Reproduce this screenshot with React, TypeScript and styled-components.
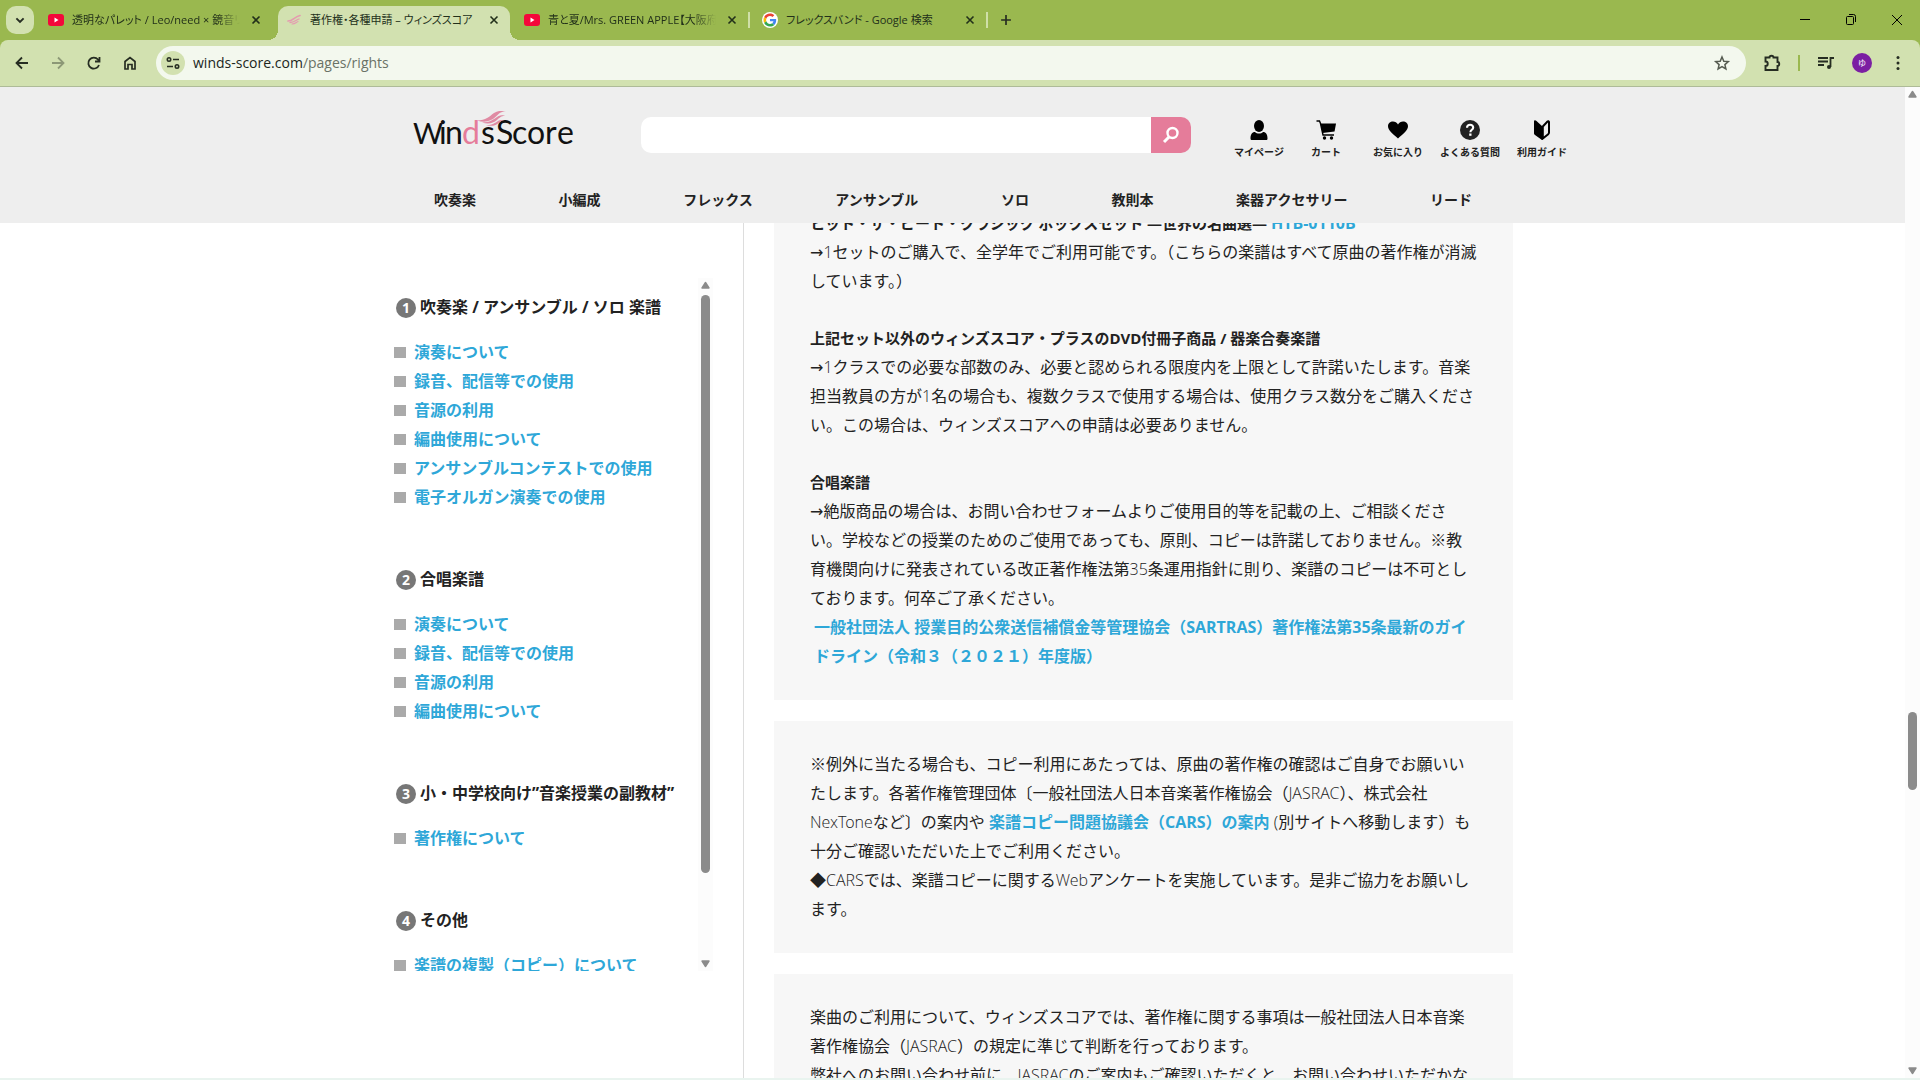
import React from "react";
import styled, { createGlobalStyle, css } from "styled-components";

const uiFont = `"Open Sans", "Noto Sans CJK JP", sans-serif`;
const bodyFont = `"Open Sans Light", "Open Sans", "Noto Sans CJK JP", sans-serif`;
const link = "#2ea7d8";

const Global = createGlobalStyle`
  * { box-sizing: border-box; }
  body { margin: 0; background: #fff; color: #222; font-family: ${uiFont}; }
  button { border: 0; padding: 0; background: none; color: inherit; font: inherit; }
  a { text-decoration: none; }
  h1, h2, h3, p, ul { margin: 0; padding: 0; }
  ul { list-style: none; }
  svg { display: block; flex: none; }
`;

const Window = styled.div`
  display: flex;
  flex-direction: column;
  height: 100vh;
  overflow: hidden;
  border-bottom: 2px solid #e9f4ef;
  background: #9ab84f;
`;

/* ---------- browser chrome ---------- */

const TabStrip = styled.header`
  display: flex;
  flex: none;
  align-items: stretch;
  height: 40px;
  padding-left: 6px;
  font-size: 11px;
`;

const TabSearch = styled.button`
  display: grid;
  place-items: center;
  width: 28px;
  height: 28px;
  margin: 6px 6px 0 0;
  border-radius: 10px;
  background: #d2e1b0;
`;

const Tab = styled.div<{ $active?: boolean; $divider?: boolean }>`
  position: relative;
  display: flex;
  align-items: center;
  gap: 8px;
  width: 238px;
  height: 34px;
  margin-top: 6px;
  padding: 0 14px 6px 8px;
  ${(p) =>
    p.$divider &&
    css`
      &::after {
        content: "";
        position: absolute;
        right: 4px;
        top: 6px;
        width: 2px;
        height: 16px;
        background: #cfdfa8;
      }
    `}
  ${(p) =>
    p.$active &&
    css`
      width: 232px;
      margin-right: 6px;
      padding-right: 8px;
      border-radius: 10px 10px 0 0;
      background: #d2e1b0;
      &::before,
      &::after {
        content: "";
        position: absolute;
        bottom: 0;
        width: 10px;
        height: 10px;
      }
      &::before {
        right: 100%;
        background: radial-gradient(circle at 0 0, transparent 10px, #d2e1b0 10px);
      }
      &::after {
        left: 100%;
        background: radial-gradient(circle at 100% 0, transparent 10px, #d2e1b0 10px);
      }
    `}
`;

const TabTitle = styled.span<{ $fade?: boolean }>`
  flex: 1;
  min-width: 0;
  overflow: hidden;
  white-space: nowrap;
  line-height: 20px;
  font-feature-settings: "palt";
  color: #22301a;
  ${(p) => p.$fade && "mask-image: linear-gradient(90deg, #000 86%, transparent 100%);"}
`;

const TabClose = styled.button`
  display: grid;
  place-items: center;
  width: 16px;
  height: 16px;
`;

const NewTab = styled.button`
  display: grid;
  place-items: center;
  width: 28px;
  height: 40px;
  padding-bottom: 1px;
`;

const WindowButtons = styled.div`
  display: flex;
  margin-left: auto;
`;

const WindowButton = styled.button`
  display: grid;
  place-items: center;
  width: 46px;
  height: 40px;
`;

const Toolbar = styled.div`
  display: flex;
  flex: none;
  align-items: center;
  height: 47px;
  padding: 0 4px;
  border-radius: 8px 8px 0 0;
  border-bottom: 1px solid #aebb98;
  background: #d2e1b0;
`;

const ToolButton = styled.button<{ $dim?: boolean }>`
  display: grid;
  place-items: center;
  width: 36px;
  height: 34px;
  opacity: ${(p) => (p.$dim ? 0.4 : 1)};
`;

const Omnibox = styled.div`
  display: flex;
  flex: 1;
  align-items: center;
  height: 34px;
  margin: 0 8px;
  padding: 0 6px 0 5px;
  border-radius: 17px;
  background: #f3f8ee;
`;

const SiteInfo = styled.button`
  display: grid;
  place-items: center;
  width: 24px;
  height: 24px;
  border-radius: 50%;
  background: #d2e1b0;
`;

const Url = styled.div`
  flex: 1;
  padding-left: 8px;
  font-size: 14px;
  line-height: 20px;
  color: #6a7266;
  b {
    font-weight: 400;
    color: #20261c;
  }
`;

const ToolDivider = styled.span`
  width: 2px;
  height: 16px;
  margin: 0 8px;
  background: #9ab84f;
`;

const Avatar = styled.button`
  width: 20px;
  height: 20px;
  margin: 0 8px;
  border-radius: 50%;
  background: #7b1fa2;
  color: #fff;
  font-size: 8px;
  line-height: 20px;
`;

/* ---------- scroll bars ---------- */

const ScrollRail = styled.div`
  display: flex;
  flex: none;
  flex-direction: column;
  align-items: center;
  gap: 5px;
  width: 15px;
  padding: 3px 0;
  background: #fcfcfc;
`;

const RailSpace = styled.span<{ $grow: number }>`
  flex: ${(p) => p.$grow} 0 0px;
  margin-bottom: -5px;
`;

const Thumb = styled.span<{ $grow: number }>`
  flex: ${(p) => p.$grow} 0 0px;
  width: 9px;
  border-radius: 5px;
  background: #8b8b8b;
`;

const Arrow = ({ down }: { down?: boolean }) => (
  <svg width="9" height="8" viewBox="0 0 9 8">
    <path
      d={down ? "M1 1h7L4.500 6.500z" : "M4.500 1.500L8 7H1z"}
      fill="#8b8b8b"
      stroke="#8b8b8b"
      strokeWidth="1.400"
      strokeLinejoin="round"
    />
  </svg>
);

const Scrollbar = ({ before, thumb, after }: { before: number; thumb: number; after: number }) => (
  <ScrollRail>
    <Arrow />
    <RailSpace $grow={before} />
    <Thumb $grow={thumb} />
    <RailSpace $grow={after} />
    <Arrow down />
  </ScrollRail>
);

/* ---------- site ---------- */

const Viewport = styled.div`
  display: flex;
  flex: 1;
  min-height: 0;
  background: #fff;
`;

const Site = styled.div`
  display: flex;
  flex: 1;
  flex-direction: column;
  min-width: 0;
`;

const SiteHeader = styled.header`
  flex: none;
  background: #eee;
`;

/* wider than the content column: the shortcuts reach past its right edge */
const HeaderRow = styled.div`
  display: flex;
  align-items: center;
  max-width: 1251px;
  height: 80px;
  margin: 0 auto;
  padding: 16px 0 0 86px;
`;

const LogoLink = styled.a`
  margin-right: 66px;
`;

const Search = styled.form`
  display: flex;
  flex: 1;
  height: 36px;
  margin-right: 37px;
  border-radius: 10px;
  overflow: hidden;
  input {
    flex: 1;
    min-width: 0;
    border: 0;
    padding: 0 12px;
    background: #fff;
    font: inherit;
    outline: 0;
  }
  button {
    display: grid;
    place-items: center;
    width: 40px;
    background: #e57c9a;
  }
`;

const Shortcuts = styled.nav`
  display: flex;
`;

const Shortcut = styled.a<{ $narrow?: boolean }>`
  display: flex;
  flex-direction: column;
  align-items: center;
  gap: 5px;
  width: ${(p) => (p.$narrow ? 62 : 72)}px;
  padding-top: 8px;
  color: #222;
  font-size: 10px;
  font-weight: 700;
  line-height: 14px;
  white-space: nowrap;
`;

const CategoryNav = styled.nav`
  display: flex;
  align-items: center;
  justify-content: space-between;
  max-width: 1121px;
  height: 46px;
  margin: 10px auto 0;
  padding: 0 41px 0 42px;
  a {
    color: #222;
    font-size: 14px;
    font-weight: 700;
    line-height: 20px;
  }
`;

const Columns = styled.div`
  display: flex;
  flex: 1;
  gap: 30px;
  width: 100%;
  max-width: 1121px;
  min-height: 0;
  margin: 0 auto;
  overflow: hidden;
`;

const Sidebar = styled.aside`
  display: flex;
  flex: none;
  width: 352px;
  padding: 55px 30px 107px 0;
  border-right: 1px solid #ddd;
`;

const SideList = styled.div`
  display: flex;
  flex: 1;
  flex-direction: column;
  gap: 53px;
  min-width: 0;
  padding-top: 15px;
  overflow: hidden;
  font-size: 16px;
  font-weight: 700;
  line-height: 29px;
  white-space: nowrap;
`;

const SideHeading = styled.h2`
  display: flex;
  align-items: center;
  gap: 4px;
  margin-bottom: 16px;
  padding-left: 4px;
  font-size: 16px;
`;

const Numeral = styled.span`
  width: 20px;
  height: 20px;
  border-radius: 50%;
  background: #777;
  color: #fff;
  font-size: 14px;
  line-height: 20px;
  text-align: center;
`;

const SideItem = styled.li`
  display: flex;
  align-items: center;
  gap: 8px;
  padding-left: 2px;
  &::before {
    content: "";
    width: 12px;
    height: 11px;
    background: #aaa;
  }
  a {
    color: ${link};
  }
`;

/* the article is scrolled: its first card starts above the visible area */
const Article = styled.main`
  display: flex;
  flex: 1;
  flex-direction: column;
  gap: 21px;
  min-width: 0;
  margin-top: -43px;
`;

const Card = styled.section`
  display: flex;
  flex: none;
  flex-direction: column;
  gap: 28px;
  padding: 29px 36px;
  background: #f7f7f7;
  font-family: ${bodyFont};
  font-size: 16px;
  line-height: 29px;
  a,
  h3 {
    font-family: ${uiFont};
    font-weight: 700;
  }
  h3 {
    font-size: 15px;
  }
  a {
    color: ${link};
    font-size: 16px;
  }
`;

const Lead = styled.span`
  font-family: "DejaVu Sans", sans-serif;
  line-height: 1;
`;

const IndentedLink = styled.a`
  display: block;
  padding-left: 4px;
`;

/* ---------- drawings ---------- */

const YouTube = () => (
  <svg width="16" height="16" viewBox="0 0 16 16">
    <rect y="2" width="16" height="12" rx="3" fill="#f4083a" />
    <path d="M6.500 5.500v5l4-2.500z" fill="#fff" />
  </svg>
);

const Wing = () => (
  <svg width="16" height="16" viewBox="0 0 16 16" fill="none" stroke="#e59ab0" strokeLinecap="round">
    <path d="M2 9c5 0 6-4 12-5.500" strokeWidth="1.700" />
    <path d="M4 10.500c4 0 6-2.500 9-3.500" strokeWidth="1.300" />
    <path d="M6 12c3 0 4-1.500 6-2.500" strokeWidth="1.100" />
  </svg>
);

const Google = () => (
  <svg width="16" height="16" viewBox="0 0 48 48">
    <circle cx="24" cy="24" r="24" fill="#fff" />
    <g transform="translate(4.500 4.500) scale(.81)">
      <path fill="#ea4335" d="M24 9.500c3.540 0 6.710 1.220 9.210 3.600l6.850-6.850C35.900 2.380 30.470 0 24 0 14.620 0 6.510 5.380 2.560 13.220l7.980 6.190C12.430 13.720 17.740 9.500 24 9.500z" />
      <path fill="#4285f4" d="M46.980 24.550c0-1.570-.15-3.090-.38-4.550H24v9.020h12.940c-.58 2.960-2.260 5.480-4.780 7.180l7.730 6c4.510-4.180 7.090-10.360 7.090-17.650z" />
      <path fill="#fbbc05" d="M10.530 28.590A14.500 14.500 0 0 1 9.770 24c0-1.600.27-3.140.76-4.590l-7.980-6.190A23.900 23.900 0 0 0 0 24c0 3.880.92 7.540 2.560 10.780z" />
      <path fill="#34a853" d="M24 48c6.480 0 11.930-2.130 15.890-5.810l-7.730-6c-2.150 1.450-4.920 2.300-8.160 2.300-6.260 0-11.570-4.220-13.470-9.910l-7.980 6.190C6.510 42.620 14.620 48 24 48z" />
    </g>
  </svg>
);

const Cross = () => (
  <svg width="10" height="10" viewBox="0 0 10 10" stroke="#22301a" strokeWidth="1.600">
    <path d="M1.500 1.500l7 7M8.500 1.500l-7 7" />
  </svg>
);

const Line = ({ d, w = 2, size = 20, color = "#262d22" }: { d: string; w?: number; size?: number; color?: string }) => (
  <svg width={size} height={size} viewBox="0 0 20 20" fill="none" stroke={color} strokeWidth={w}>
    <path d={d} />
  </svg>
);

const Logo = () => (
  <svg width="162" height="48" viewBox="0 0 162 48" role="img" aria-label="Winds Score">
    <g fontFamily="Lato, sans-serif" fontSize="32" fill="#111">
      <text x="0" y="33" fontSize="29">W</text>
      <text x="26" y="33">i</text>
      <text x="32" y="33">n</text>
      <text x="49" y="33" fill="#e57c9a">d</text>
      <text x="68" y="33">s</text>
      <text x="83" y="33">S</text>
      <text x="99" y="33">c</text>
      <text x="114" y="33">o</text>
      <text x="132" y="33">r</text>
      <text x="144" y="33">e</text>
    </g>
    <g fill="#e08aa3">
      <path d="M64 9.500c9 0 12-4 17-7.500 4-2.500 8-2.500 12-2-5 .5-7 2.500-10 5.500-5 5-11 6.500-19 4z" />
      <path d="M69 11.500c8 0 11-3 15-5.500 3-1.700 6-1.800 8-1.500-4 .8-5 2-8 4.500-4 3.500-9 4.300-15 2.500z" />
      <path d="M73 14c6 .3 9-2 12-4 2-1.300 4-1.200 6-1-3 .8-4 1.500-6 3.500-3 2.500-7 3-12 1.500z" />
    </g>
  </svg>
);

const icons = {
  user: (
    <svg width="20" height="20" viewBox="0 0 20 20">
      <ellipse cx="10" cy="6" rx="5" ry="6" />
      <path d="M1.500 18.500c0-4 1.500-6.500 4.500-6.500 1 1 2.500 1.500 4 1.500s3-.5 4-1.500c3 0 4.500 2.500 4.500 6.500 0 1-.5 1.500-1.500 1.500H3c-1 0-1.500-.5-1.500-1.500z" />
    </svg>
  ),
  cart: (
    <svg width="20" height="20" viewBox="0 0 20 20">
      <path d="M.5 1h3l1 2.500L7 15h11" fill="none" stroke="#000" strokeWidth="1.400" />
      <path d="M4.500 3.500H20l-1.500 8L6.500 13z" />
      <circle cx="8.500" cy="18" r="1.700" />
      <circle cx="15.500" cy="18" r="1.700" />
    </svg>
  ),
  heart: (
    <svg width="20" height="20" viewBox="0 0 20 20">
      <path d="M10 18.500C5 14 0 10.500 0 6.300 0 3.500 2.200 1.500 5 1.500c2 0 4 1 5 3 1-2 3-3 5-3 2.800 0 5 2 5 4.800 0 4.200-5 7.700-10 12.200z" />
    </svg>
  ),
  help: (
    <svg width="20" height="20" viewBox="0 0 20 20">
      <circle cx="10" cy="10" r="10" fill="#222" />
      <path d="M7 7.700c0-1.900 1.300-3 3.100-3s3.100 1.100 3.100 2.700c0 2.400-2.800 2.300-2.800 4.800" fill="none" stroke="#fff" strokeWidth="2.100" />
      <rect x="9.200" y="13.500" width="2.300" height="2.300" fill="#fff" />
    </svg>
  ),
  guide: (
    <svg width="20" height="20" viewBox="0 0 20 20">
      <path d="M2 1.500C2 .2 3.300-.2 4.200.8L10 6v14l-7-5c-.7-.6-1-1-1-2z" />
      <path d="M10.800 6.500l4.700-5c.5-.5 1.500-.3 1.500.6v10.500c0 .7-.3 1.200-.8 1.600L10.800 18.500z" fill="none" stroke="#000" strokeWidth="2" />
    </svg>
  ),
};

/* ---------- data ---------- */

const shortcuts: { icon: keyof typeof icons; label: string }[] = [
  { icon: "user", label: "マイページ" },
  { icon: "cart", label: "カート" },
  { icon: "heart", label: "お気に入り" },
  { icon: "help", label: "よくある質問" },
  { icon: "guide", label: "利用ガイド" },
];

const categories = ["吹奏楽", "小編成", "フレックス", "アンサンブル", "ソロ", "教則本", "楽器アクセサリー", "リード"];

const sections = [
  {
    title: "吹奏楽 / アンサンブル / ソロ 楽譜",
    items: ["演奏について", "録音、配信等での使用", "音源の利用", "編曲使用について", "アンサンブルコンテストでの使用", "電子オルガン演奏での使用"],
  },
  { title: "合唱楽譜", items: ["演奏について", "録音、配信等での使用", "音源の利用", "編曲使用について"] },
  { title: "小・中学校向け”音楽授業の副教材”", items: ["著作権について"] },
  { title: "その他", items: ["楽譜の複製（コピー）について"] },
];

const CloseTab = () => (
  <TabClose aria-label="タブを閉じる">
    <Cross />
  </TabClose>
);

export default function App() {
  return (
    <Window lang="ja">
      <Global />
      <TabStrip>
        <TabSearch aria-label="タブを検索">
          <Line d="M5.500 8l4.500 4.500L14.500 8" w={2.4} size={16} />
        </TabSearch>
        <Tab>
          <YouTube />
          <TabTitle $fade>透明なパレット / Leo/need × 鏡音リン</TabTitle>
          <CloseTab />
        </Tab>
        <Tab $active>
          <Wing />
          <TabTitle>著作権・各種申請 – ウィンズスコア</TabTitle>
          <CloseTab />
        </Tab>
        <Tab $divider>
          <YouTube />
          <TabTitle $fade>青と夏/Mrs. GREEN APPLE【大阪府</TabTitle>
          <CloseTab />
        </Tab>
        <Tab $divider>
          <Google />
          <TabTitle>フレックスバンド - Google 検索</TabTitle>
          <CloseTab />
        </Tab>
        <NewTab aria-label="新しいタブ">
          <Line d="M10 3v14M3 10h14" w={2.4} size={14} />
        </NewTab>
        <WindowButtons>
          <WindowButton aria-label="最小化">
            <Line d="M5 9.500h10" w={1} color="#000" />
          </WindowButton>
          <WindowButton aria-label="元に戻す">
            <Line d="M5.500 7.500q0-1 1-1h5q1 0 1 1v6q0 1-1 1h-5q-1 0-1-1zM8 4.500h4.500q2 0 2 2V12" w={1} color="#000" />
          </WindowButton>
          <WindowButton aria-label="閉じる">
            <Line d="M5 5l10 10M15 5L5 15" w={1} color="#000" />
          </WindowButton>
        </WindowButtons>
      </TabStrip>

      <Toolbar>
        <ToolButton aria-label="戻る">
          <Line d="M16 10H4.500M10 4.500L4.500 10l5.500 5.500" w={1.8} />
        </ToolButton>
        <ToolButton aria-label="進む" $dim>
          <Line d="M4 10h11.500M10 4.500l5.500 5.500-5.500 5.500" w={1.8} />
        </ToolButton>
        <ToolButton aria-label="再読み込み">
          <Line d="M15 12a5.500 5.500 0 1 1-1-5.500l1.200 1.500M15.500 4v4.500H11" w={1.8} />
        </ToolButton>
        <ToolButton aria-label="ホーム">
          <Line d="M5 8.500L10 4.500l5 4V16h-3v-4.500H8V16H5z" w={1.7} />
        </ToolButton>
        <Omnibox>
          <SiteInfo aria-label="サイト情報">
            <svg width="16" height="16" viewBox="0 0 16 16" fill="none" stroke="#262d22" strokeWidth="1.600">
              <circle cx="4" cy="4.500" r="1.700" />
              <path d="M8 4.500h6M2 11.500h6" />
              <circle cx="12" cy="11.500" r="1.700" />
            </svg>
          </SiteInfo>
          <Url>
            <b>winds-score.com</b>/pages/rights
          </Url>
          <ToolButton aria-label="ブックマーク">
            <Line d="M10 4l1.800 4.200 4.500.4-3.400 3 1 4.400-3.900-2.300L6.100 16l1-4.400-3.400-3 4.500-.4z" w={1.5} color="#555b50" />
          </ToolButton>
        </Omnibox>
        <ToolButton aria-label="拡張機能">
          <Line d="M3.500 4.500h4a2 1.800 0 0 1 4 0h4V9a1.800 2 0 0 1 0 4v4h-12v-4a2.200 2.200 0 0 0 0-4.500z" w={1.9} />
        </ToolButton>
        <ToolDivider />
        <ToolButton aria-label="メディア">
          <svg width="18" height="18" viewBox="0 0 18 18" fill="none" stroke="#262d22" strokeWidth="1.800">
            <path d="M1 4h10M1 7.500h10M1 11h6M13.500 13V4H17" />
            <circle cx="12" cy="13" r="2" fill="#262d22" stroke="none" />
          </svg>
        </ToolButton>
        <Avatar aria-label="プロフィール">ゆ</Avatar>
        <ToolButton aria-label="メニュー">
          <svg width="16" height="16" viewBox="0 0 16 16" fill="#262d22">
            <circle cx="8" cy="2.500" r="1.500" />
            <circle cx="8" cy="8" r="1.500" />
            <circle cx="8" cy="13.500" r="1.500" />
          </svg>
        </ToolButton>
      </Toolbar>

      <Viewport>
        <Site>
          <SiteHeader>
            <HeaderRow>
              <LogoLink href="#top">
                <Logo />
              </LogoLink>
              <Search>
                <input type="text" aria-label="商品を検索" />
                <button type="button" aria-label="検索">
                  <svg width="20" height="20" viewBox="0 0 20 20" fill="none" stroke="#fff" strokeWidth="2.400">
                    <circle cx="11.500" cy="8" r="5" />
                    <path d="M8 12l-5 5" strokeWidth="3" />
                  </svg>
                </button>
              </Search>
              <Shortcuts>
                {shortcuts.map((s) => (
                  <Shortcut key={s.icon} href={`#${s.icon}`} $narrow={s.icon === "user"}>
                    {icons[s.icon]}
                    {s.label}
                  </Shortcut>
                ))}
              </Shortcuts>
            </HeaderRow>
            <CategoryNav>
              {categories.map((c) => (
                <a key={c} href="#category">
                  {c}
                </a>
              ))}
            </CategoryNav>
          </SiteHeader>

          <Columns>
            <Sidebar>
              <SideList>
                {sections.map((s, i) => (
                  <section key={s.title}>
                    <SideHeading>
                      <Numeral>{i + 1}</Numeral>
                      {s.title}
                    </SideHeading>
                    <ul>
                      {s.items.map((item) => (
                        <SideItem key={item}>
                          <a href="#section">{item}</a>
                        </SideItem>
                      ))}
                    </ul>
                  </section>
                ))}
              </SideList>
              <Scrollbar before={1} thumb={578} after={82} />
            </Sidebar>

            <Article>
              <Card>
                <div>
                  <h3>
                    ヒット・ザ・ビート・クラシック ボックスセット ―世界の名曲選― <a href="#htb">HTB-0110B</a>
                  </h3>
                  <p>
                    <Lead>→</Lead>1セットのご購入で、全学年でご利用可能です。（こちらの楽譜はすべて原曲の著作権が消滅しています。）
                  </p>
                </div>
                <div>
                  <h3>上記セット以外のウィンズスコア・プラスのDVD付冊子商品 / 器楽合奏楽譜</h3>
                  <p>
                    <Lead>→</Lead>1クラスでの必要な部数のみ、必要と認められる限度内を上限として許諾いたします。音楽担当教員の方が1名の場合も、複数クラスで使用する場合は、使用クラス数分をご購入ください。この場合は、ウィンズスコアへの申請は必要ありません。
                  </p>
                </div>
                <div>
                  <h3>合唱楽譜</h3>
                  <p>
                    <Lead>→</Lead>絶版商品の場合は、お問い合わせフォームよりご使用目的等を記載の上、ご相談ください。学校などの授業のためのご使用であっても、原則、コピーは許諾しておりません。※教育機関向けに発表されている改正著作権法第35条運用指針に則り、楽譜のコピーは不可としております。何卒ご了承ください。
                  </p>
                  <IndentedLink href="#sartras">
                    一般社団法人 授業目的公衆送信補償金等管理協会（SARTRAS）著作権法第35条最新のガイドライン（令和３（２０２１）年度版）
                  </IndentedLink>
                </div>
              </Card>
              <Card>
                <p>
                  ※例外に当たる場合も、コピー利用にあたっては、原曲の著作権の確認はご自身でお願いいたします。各著作権管理団体〔一般社団法人日本音楽著作権協会（JASRAC）、株式会社NexToneなど〕の案内や <a href="#cars">楽譜コピー問題協議会（CARS）の案内</a> (別サイトへ移動します）も十分ご確認いただいた上でご利用ください。
                  <br />
                  ◆CARSでは、楽譜コピーに関するWebアンケートを実施しています。是非ご協力をお願いします。
                </p>
              </Card>
              <Card>
                <p>
                  楽曲のご利用について、ウィンズスコアでは、著作権に関する事項は一般社団法人日本音楽著作権協会（JASRAC）の規定に準じて判断を行っております。
                  <br />
                  弊社へのお問い合わせ前に、JASRACのご案内もご確認いただくと、お問い合わせいただかなくても解決する場合がございます。
                </p>
              </Card>
            </Article>
          </Columns>
        </Site>
        <Scrollbar before={613} thumb={78} after={274} />
      </Viewport>
    </Window>
  );
}
